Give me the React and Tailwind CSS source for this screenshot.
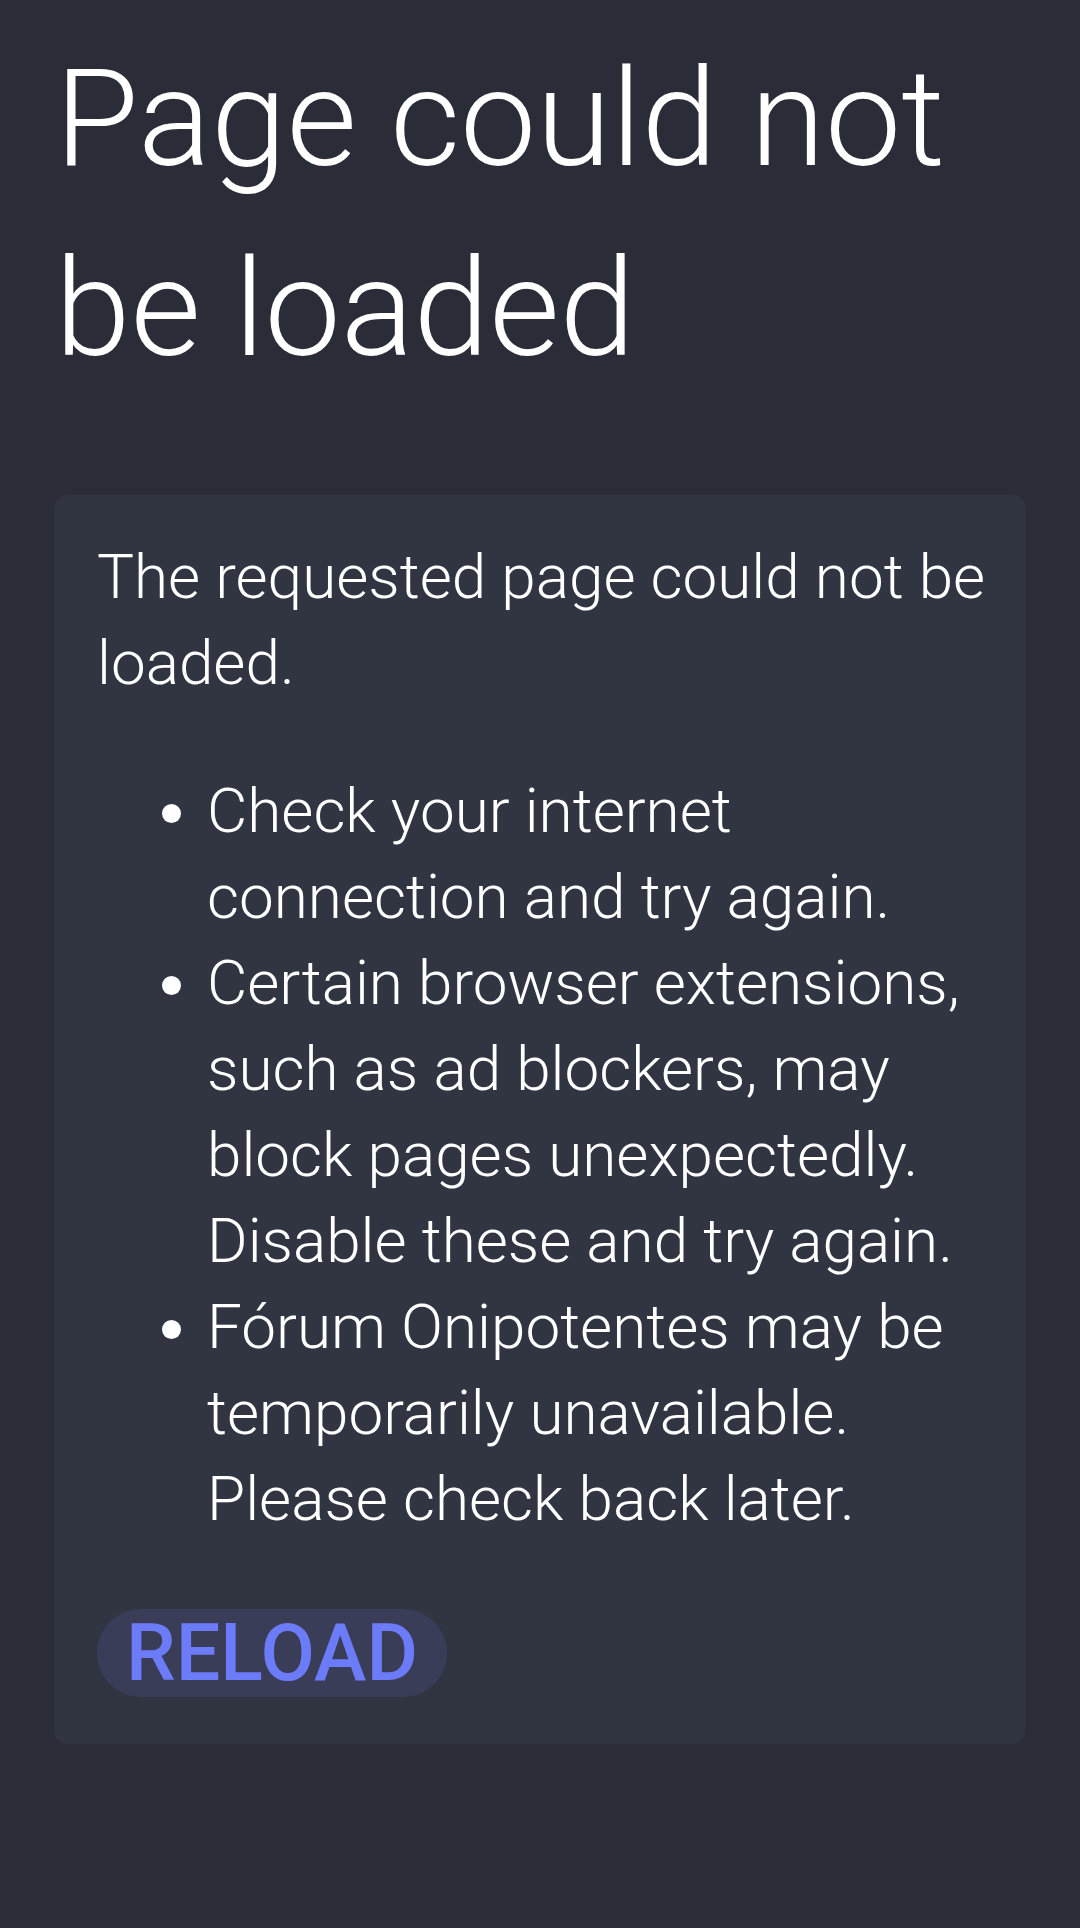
export default function App() {
  return (
    <div className="min-h-[1928px] bg-[#2a2d38] px-[55px] pt-[24px] pb-10 text-white font-['Roboto',sans-serif]">
      <h1 className="text-[136px] leading-[190px] font-light">Page could not be loaded</h1>

      <div className="mt-[91px] rounded-[12px] bg-[#313542] pl-[42px] pr-[34px] pt-[39px] pb-[47px]">
        <p className="text-[62px] leading-[86px] font-light">The requested page could not be loaded.</p>

        <ul className="mt-[62px] list-disc pl-[110px] text-[62px] leading-[86px] font-light">
          <li>Check your internet connection and try again.</li>
          <li>Certain browser extensions, such as ad blockers, may block pages unexpectedly. Disable these and try again.</li>
          <li>Fórum Onipotentes may be temporarily unavailable. Please check back later.</li>
        </ul>

        <button
          type="button"
          className="mt-[67px] flex h-[88px] w-[350px] items-center justify-center rounded-full bg-[#393d57] text-[79px] leading-none font-medium text-[#6c7bf7]"
        >
          RELOAD
        </button>
      </div>
    </div>
  );
}
